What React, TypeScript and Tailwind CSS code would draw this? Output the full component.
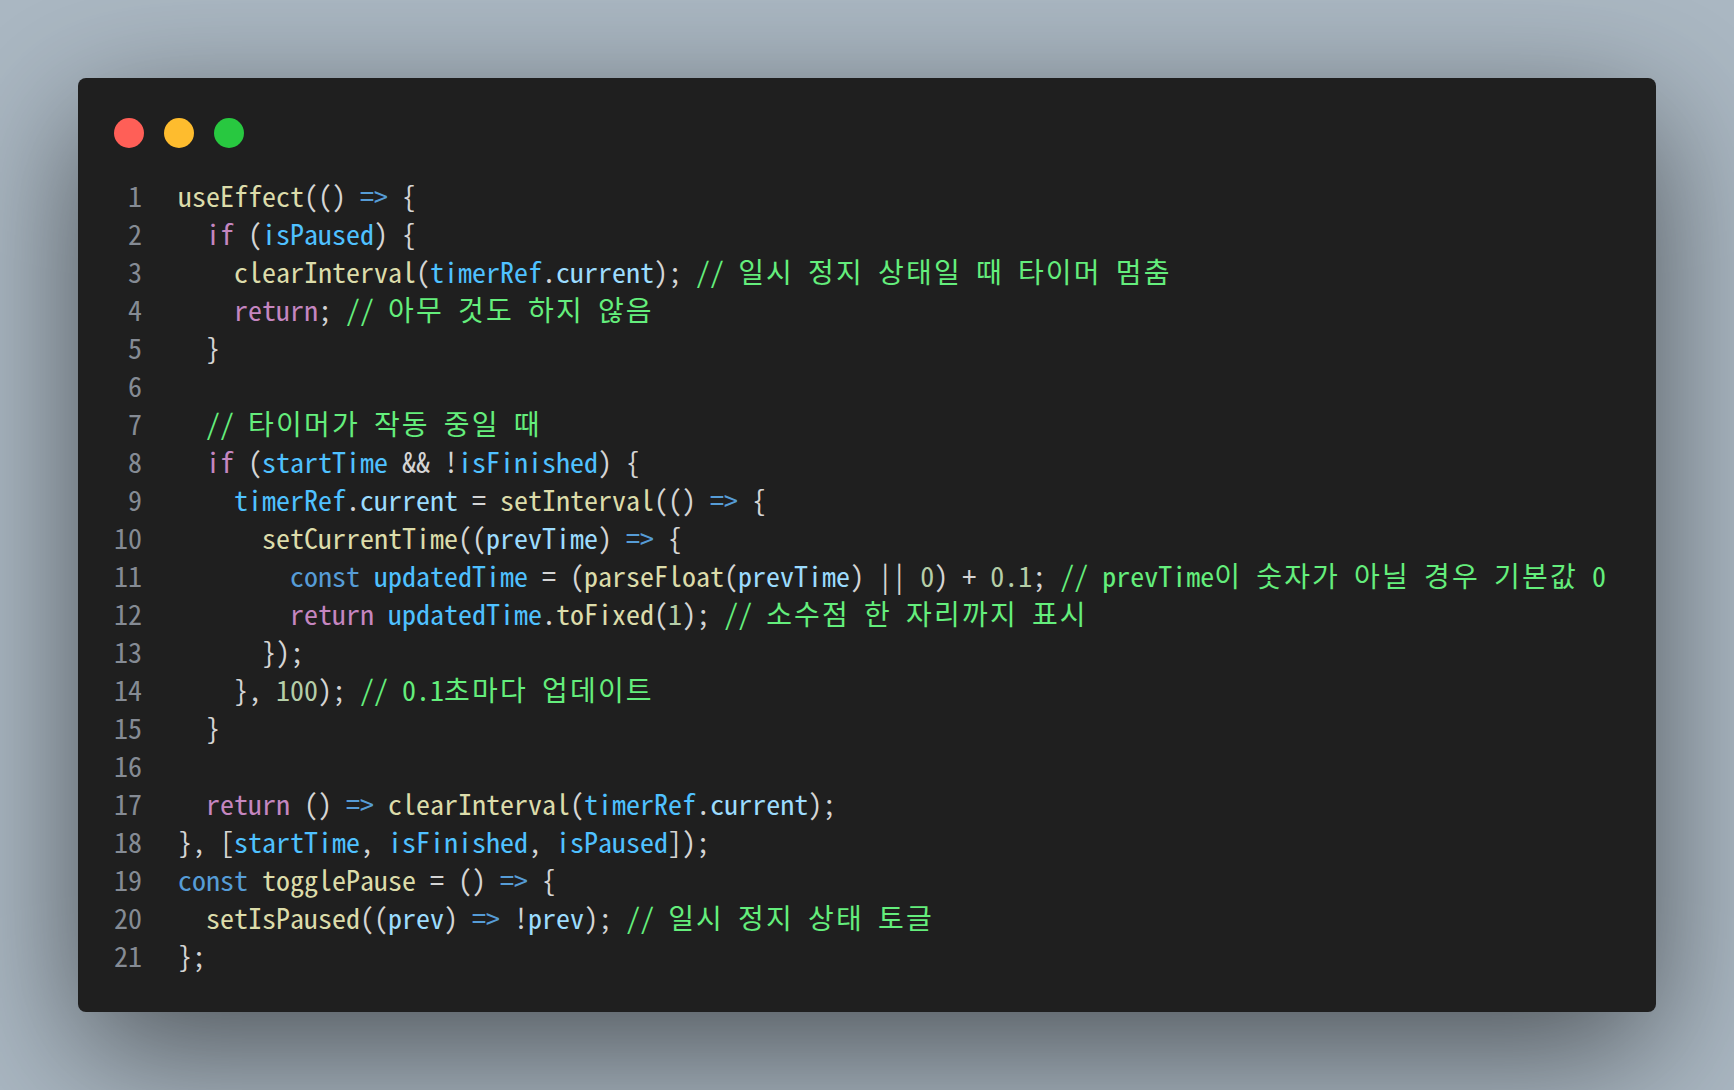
import React from "react";

type Tok = [keyof typeof C, string];

const C = {
  f: "text-[#dcdcaa]",
  k: "text-[#c586c0]",
  s: "text-[#569cd6]",
  v: "text-[#4fc1ff]",
  p: "text-[#9cdcfe]",
  o: "text-[#d4d4d4]",
  n: "text-[#b5cea8]",
  c: "text-[#64ee7c]",
};

const lines: Tok[][] = [
  [["f", "useEffect"], ["o", "(() "], ["s", "=>"], ["o", " {"]],
  [["o", "  "], ["k", "if"], ["o", " ("], ["v", "isPaused"], ["o", ") {"]],
  [
    ["o", "    "],
    ["f", "clearInterval"],
    ["o", "("],
    ["v", "timerRef"],
    ["o", "."],
    ["p", "current"],
    ["o", "); "],
    ["c", "// 일시 정지 상태일 때 타이머 멈춤"],
  ],
  [["o", "    "], ["k", "return"], ["o", "; "], ["c", "// 아무 것도 하지 않음"]],
  [["o", "  }"]],
  [],
  [["o", "  "], ["c", "// 타이머가 작동 중일 때"]],
  [
    ["o", "  "],
    ["k", "if"],
    ["o", " ("],
    ["v", "startTime"],
    ["o", " && !"],
    ["v", "isFinished"],
    ["o", ") {"],
  ],
  [
    ["o", "    "],
    ["v", "timerRef"],
    ["o", "."],
    ["p", "current"],
    ["o", " = "],
    ["f", "setInterval"],
    ["o", "(() "],
    ["s", "=>"],
    ["o", " {"],
  ],
  [
    ["o", "      "],
    ["f", "setCurrentTime"],
    ["o", "(("],
    ["p", "prevTime"],
    ["o", ") "],
    ["s", "=>"],
    ["o", " {"],
  ],
  [
    ["o", "        "],
    ["s", "const"],
    ["o", " "],
    ["v", "updatedTime"],
    ["o", " = ("],
    ["f", "parseFloat"],
    ["o", "("],
    ["p", "prevTime"],
    ["o", ") || "],
    ["n", "0"],
    ["o", ") + "],
    ["n", "0.1"],
    ["o", "; "],
    ["c", "// prevTime이 숫자가 아닐 경우 기본값 0"],
  ],
  [
    ["o", "        "],
    ["k", "return"],
    ["o", " "],
    ["v", "updatedTime"],
    ["o", "."],
    ["f", "toFixed"],
    ["o", "("],
    ["n", "1"],
    ["o", "); "],
    ["c", "// 소수점 한 자리까지 표시"],
  ],
  [["o", "      });"]],
  [["o", "    }, "], ["n", "100"], ["o", "); "], ["c", "// 0.1초마다 업데이트"]],
  [["o", "  }"]],
  [],
  [
    ["o", "  "],
    ["k", "return"],
    ["o", " () "],
    ["s", "=>"],
    ["o", " "],
    ["f", "clearInterval"],
    ["o", "("],
    ["v", "timerRef"],
    ["o", "."],
    ["p", "current"],
    ["o", ");"],
  ],
  [
    ["o", "}, ["],
    ["v", "startTime"],
    ["o", ", "],
    ["v", "isFinished"],
    ["o", ", "],
    ["v", "isPaused"],
    ["o", "]);"],
  ],
  [["s", "const"], ["o", " "], ["f", "togglePause"], ["o", " = () "], ["s", "=>"], ["o", " {"]],
  [
    ["o", "  "],
    ["f", "setIsPaused"],
    ["o", "(("],
    ["p", "prev"],
    ["o", ") "],
    ["s", "=>"],
    ["o", " !"],
    ["p", "prev"],
    ["o", "); "],
    ["c", "// 일시 정지 상태 토글"],
  ],
  [["o", "};"]],
];

// hangul in the source font runs a little wider than two cells
const Text = ({ text }: { text: string }) => (
  <>
    {text.split(/([가-힣]+)/).map((part, i) =>
      /[가-힣]/.test(part) ? (
        <span key={i} className="tracking-[2.2px]">
          {part}
        </span>
      ) : (
        part
      )
    )}
  </>
);

const App = () => {
  return (
    <div className="flex min-h-screen w-full items-start bg-[#abb8c3] p-[78px]">
      <div className="w-full overflow-hidden rounded-[8px] bg-[#1f1f1f] px-[36px] pt-[40px] pb-[38px] shadow-[0_40px_136px_rgba(0,0,0,0.55)]">
        <div className="flex gap-[20px]">
          <span className="size-[30px] rounded-full bg-[#ff5f57]" />
          <span className="size-[30px] rounded-full bg-[#febc2e]" />
          <span className="size-[30px] rounded-full bg-[#28c840]" />
        </div>
        <div className="mt-[28px] font-['Noto_Sans_Mono_CJK_KR','Noto_Sans_CJK_KR','Liberation_Mono',monospace] text-[28px] leading-[38px]">
          {lines.map((toks, i) => (
            <div key={i} className="flex h-[38px]">
              <span className="w-[28px] shrink-0 text-right text-[#858b94]">
                {i + 1}
              </span>
              <span className="ml-[36px] whitespace-pre">
                {toks.map(([c, t], j) => (
                  <span key={j} className={C[c]}>
                    {c === "c" ? <Text text={t} /> : t}
                  </span>
                ))}
              </span>
            </div>
          ))}
        </div>
      </div>
    </div>
  );
};

export default App;
